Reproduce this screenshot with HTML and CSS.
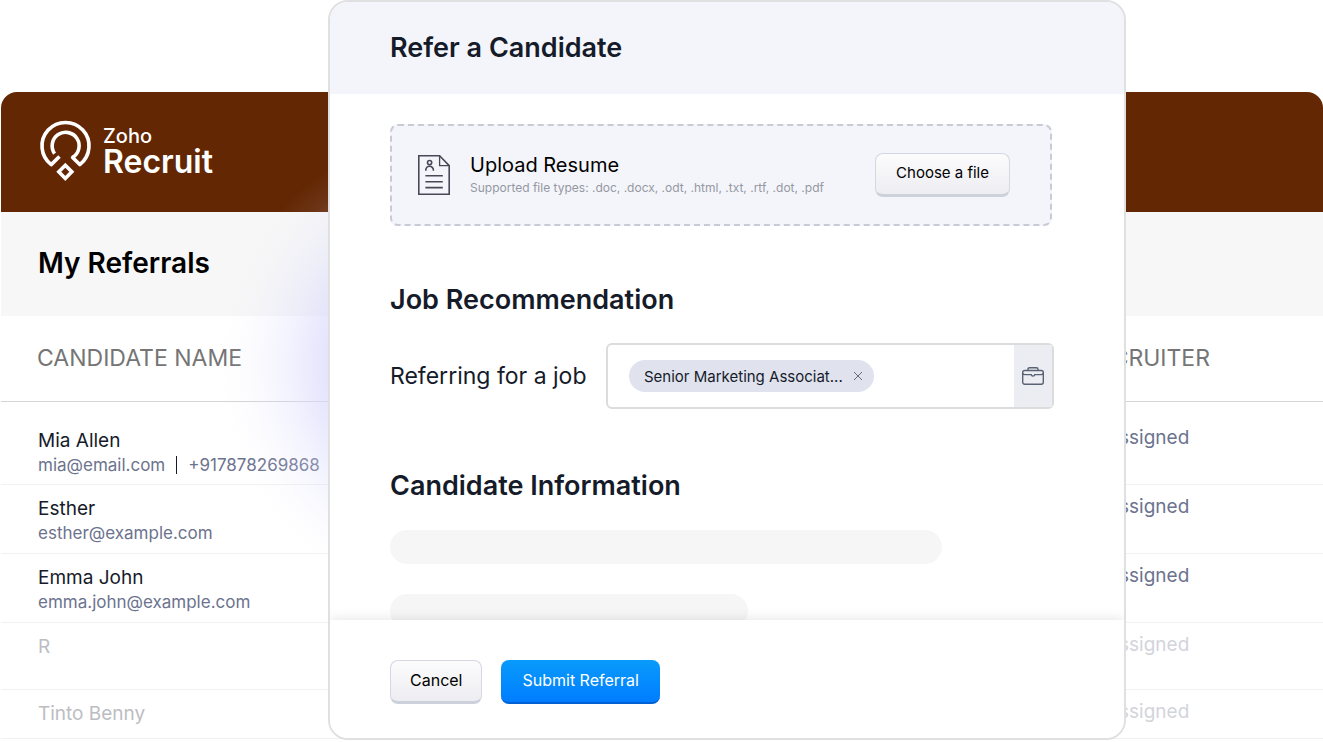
FILE: index.html
```
<!DOCTYPE html>
<html lang="en">
<head>
    <meta charset="UTF-8">
    <meta name="viewport" content="width=device-width, initial-scale=1.0">
    <title>Zoho Recruit - Refer a Candidate</title>
    <link rel="stylesheet" href="styles.css">
</head>
<body>
    <div class="page">
        <main class="app">
            <header class="topbar">
                <svg class="logo-icon" viewBox="0 0 54 62" fill="none" stroke="#fff" stroke-width="3.6">
                    <path d="M20.5 36.5L12.2 44.6A23.5 23.5 0 1 1 40.8 44.6L33.6 37.4A13.5 13.5 0 1 0 15.6 33.6" stroke-linejoin="round"/>
                    <path d="M26.3 45.2L32.8 51.8L26.3 58.4L19.8 51.8Z"/>
                </svg>
                <div class="logo-text">
                    <span class="logo-brand">Zoho</span>
                    <span class="logo-product">Recruit</span>
                </div>
            </header>
            <div class="titlebar">
                <h1>My Referrals</h1>
            </div>
            <table class="referrals">
                <thead>
                    <tr>
                        <th>CANDIDATE NAME</th>
                        <th class="recruiter">RECRUITER</th>
                    </tr>
                </thead>
                <tbody>
                    <tr class="first">
                        <td>
                            <div class="name">Mia Allen</div>
                            <div class="contact"><span>mia@email.com</span><span class="phone">+917878269868</span></div>
                        </td>
                        <td class="recruiter">Unassigned</td>
                    </tr>
                    <tr>
                        <td>
                            <div class="name">Esther</div>
                            <div class="contact">esther@example.com</div>
                        </td>
                        <td class="recruiter">Unassigned</td>
                    </tr>
                    <tr>
                        <td>
                            <div class="name">Emma John</div>
                            <div class="contact">emma.john@example.com</div>
                        </td>
                        <td class="recruiter">Unassigned</td>
                    </tr>
                    <tr class="faded">
                        <td><div class="name">R</div></td>
                        <td class="recruiter">Unassigned</td>
                    </tr>
                    <tr class="faded last">
                        <td><div class="name">Tinto Benny</div></td>
                        <td class="recruiter">Unassigned</td>
                    </tr>
                </tbody>
            </table>
        </main>

        <div class="glow"></div>

        <form class="modal" role="dialog" aria-labelledby="modalTitle">
            <header class="modal-header">
                <h2 id="modalTitle">Refer a Candidate</h2>
            </header>
            <div class="modal-body">
                <div class="upload">
                    <svg class="resume-icon" viewBox="0 0 32 40" fill="none" stroke="#474a56" stroke-width="1.6">
                        <path d="M.8.8H21.6L31.2 10.6V39.2H.8Z"/>
                        <path d="M21.6.8V10.6H31.2" stroke-width="1.3"/>
                        <circle cx="11.6" cy="7.6" r="2.1"/>
                        <path d="M7.8 15.8V15A3.8 3.8 0 0 1 15.4 15V15.8M7.4 20.8H24.8M7.4 26.8H24.8M7.4 32.6H24.8"/>
                    </svg>
                    <div class="upload-text">
                        <div class="upload-title">Upload Resume</div>
                        <div class="upload-types">Supported file types: .doc, .docx, .odt, .html, .txt, .rtf, .dot, .pdf</div>
                    </div>
                    <button type="button" class="button choose">Choose a file</button>
                </div>

                <h3>Job Recommendation</h3>
                <div class="field">
                    <label for="job">Referring for a job</label>
                    <div class="job-box">
                        <div class="chip">
                            Senior Marketing Associat...
                            <button type="button" class="chip-remove" aria-label="Remove">
                                <svg viewBox="0 0 10 10" fill="none" stroke="#666b78"><path d="M1 1L9 9M9 1L1 9"/></svg>
                            </button>
                        </div>
                        <input type="text" id="job">
                        <button type="button" class="job-pick" aria-label="Select a job">
                            <svg viewBox="0 0 22 18" fill="none" stroke="#596273" stroke-width="1.4">
                                <rect x=".7" y="3.5" width="20.6" height="13.8" rx="2"/>
                                <path d="M6 3.5V2.3Q6 .7 7.6 .7H14.4Q16 .7 16 2.3V3.5M.7 6.2Q1.2 7.6 3 7.6H9.2Q9.5 9 11 9Q12.5 9 12.8 7.6H19Q20.8 7.6 21.3 6.2"/>
                            </svg>
                        </button>
                    </div>
                </div>

                <h3>Candidate Information</h3>
                <div class="skeleton"></div>
                <div class="skeleton short"></div>
            </div>
            <footer class="modal-footer">
                <button type="button" class="button">Cancel</button>
                <button type="submit" class="button primary">Submit Referral</button>
            </footer>
        </form>
    </div>
</body>
</html>
```
FILE: styles.css
```
* {
    box-sizing: border-box;
}
body {
    font-family: Inter, 'Liberation Sans', sans-serif;
    margin: 0;
    background-color: #fff;
    color: #161b2a;
}
h1, h2, h3 {
    margin: 0;
    font-weight: 600;
}
button, input {
    font-family: inherit;
}
.page {
    position: relative;
    min-height: 100vh;
    padding-top: 92px;
    overflow: hidden;
}
.app {
    margin-left: 1px;
}
.topbar {
    display: flex;
    align-items: center;
    gap: 10px;
    height: 120px;
    padding: 0 38px 2px;
    background-color: #632703;
    border-radius: 16px 16px 0 0;
    color: #fff;
}
.logo-icon {
    width: 54px;
    height: 62px;
}
.logo-text {
    display: flex;
    flex-direction: column;
    font-weight: 500;
}
.logo-brand {
    font-size: 20px;
    line-height: 22px;
}
.logo-product {
    font-size: 32px;
    line-height: 30px;
    font-weight: 600;
}
.titlebar {
    display: flex;
    align-items: center;
    height: 104px;
    padding: 0 37px 2px;
    background-color: #f7f7f7;
}
.titlebar h1 {
    color: #000;
    font-size: 28px;
    line-height: 36px;
}
.referrals {
    width: 100%;
    border-collapse: collapse;
    table-layout: fixed;
}
.referrals th {
    height: 85px;
    padding: 0 36px;
    border-bottom: 1px solid #d4d4d6;
    color: #757575;
    font-size: 23px;
    font-weight: 400;
    text-align: left;
}
.referrals td {
    height: 69px;
    padding: 11px 37px 0;
    border-bottom: 1px solid #f1f1f2;
    vertical-align: top;
}
.referrals .recruiter {
    width: 240px;
    padding-left: 0;
    padding-right: 0;
}
.referrals td.recruiter {
    padding-top: 10px;
    color: #6c738e;
    font-size: 19px;
    line-height: 24px;
}
.referrals .first td {
    height: 83px;
    padding-top: 26px;
}
.referrals .first td.recruiter {
    padding-top: 24px;
}
.referrals .faded td {
    height: 67px;
}
.referrals .last td {
    height: 49px;
}
.name {
    font-size: 19px;
    line-height: 26px;
}
.contact {
    display: flex;
    align-items: center;
    color: #6c738e;
    font-size: 17px;
    line-height: 22px;
}
.phone {
    margin-left: 11px;
    padding-left: 11px;
    border-left: 1px solid #161b2a;
    line-height: 18px;
}
.faded .name {
    color: #bcbdc2;
}
.referrals .faded td.recruiter {
    color: #d3d4db;
}
.glow {
    position: absolute;
    top: 129px;
    left: 222px;
    width: 472px;
    height: 472px;
    background: radial-gradient(closest-side, rgba(217, 216, 252, 0.9) 40%, rgba(217, 216, 252, 0.7) 55%, rgba(217, 216, 252, 0.28) 74%, rgba(217, 216, 252, 0.08) 89%, rgba(217, 216, 252, 0));
}
.modal {
    position: absolute;
    top: 0;
    left: 328px;
    right: 197px;
    border: 2px solid #e0e0e0;
    border-radius: 20px;
    background-color: #fff;
    overflow: hidden;
}
.modal-header {
    padding: 28px 60px;
    background-color: #f4f5fa;
}
.modal-header h2, .modal-body h3 {
    font-size: 27px;
    line-height: 36px;
}
.modal-body {
    padding: 30px 60px 0;
}
.upload {
    display: flex;
    align-items: center;
    width: 662px;
    max-width: 100%;
    height: 102px;
    margin-bottom: 56px;
    padding: 0 40px 0 26px;
    border: 2px dashed #c8cbd3;
    border-radius: 8px;
    background-color: #f4f5fa;
}
.resume-icon {
    width: 32px;
    height: 40px;
    margin-right: 20px;
}
.upload-text {
    flex: 1;
}
.upload-title {
    color: #000;
    font-size: 20px;
    line-height: 26px;
}
.upload-types {
    color: #9598a2;
    font-size: 12px;
    line-height: 20px;
}
.button {
    height: 44px;
    padding: 0 19px 3px;
    border: 1px solid #d5d8e2;
    border-bottom: 3px solid #cdd1dc;
    border-radius: 8px;
    background: linear-gradient(#fcfcfd, #ededf2);
    color: #000;
    font-size: 16px;
    cursor: pointer;
}
.button.choose {
    padding: 0 20px 3px;
    font-size: 15px;
}
.button.primary {
    padding: 0 21px 3px;
    border: 0;
    border-bottom: 2px solid #0060d6;
    background: linear-gradient(#089bfb, #007dff);
    color: #fff;
}
.field {
    display: flex;
    align-items: center;
    justify-content: space-between;
    width: 664px;
    max-width: 100%;
    margin: 25px 0 59px;
}
.field label {
    font-size: 23px;
}
.job-box {
    display: flex;
    align-items: center;
    width: 448px;
    height: 66px;
    padding-left: 21px;
    border: 2px solid #dcdcdc;
    border-radius: 6px;
}
.job-box input {
    flex: 1;
    min-width: 0;
    border: 0;
    outline: none;
    font-size: 16px;
}
.chip {
    display: flex;
    align-items: center;
    gap: 10px;
    height: 32px;
    padding: 0 11px 0 15px;
    border-radius: 16px;
    background-color: #e0e3ee;
    font-size: 15px;
    white-space: nowrap;
}
.chip-remove, .job-pick {
    display: flex;
    align-items: center;
    justify-content: center;
    border: 0;
    padding: 0;
    background: none;
    cursor: pointer;
}
.chip-remove svg {
    width: 10px;
    height: 10px;
}
.job-pick {
    align-self: stretch;
    width: 38px;
    background-color: #ecedf3;
}
.job-pick svg {
    width: 22px;
    height: 18px;
}
.skeleton {
    width: 552px;
    max-width: 100%;
    height: 34px;
    margin-top: 26px;
    border-radius: 17px;
    background-color: #f6f6f6;
}
.skeleton.short {
    width: 358px;
    margin-top: 30px;
}
/* sits over the end of the scrolled form */
.modal-footer {
    position: relative;
    display: flex;
    gap: 19px;
    margin-top: -8px;
    padding: 40px 60px 34px;
    background-color: #fff;
    box-shadow: 0 0 12px rgba(0, 0, 0, 0.12);
}
```
